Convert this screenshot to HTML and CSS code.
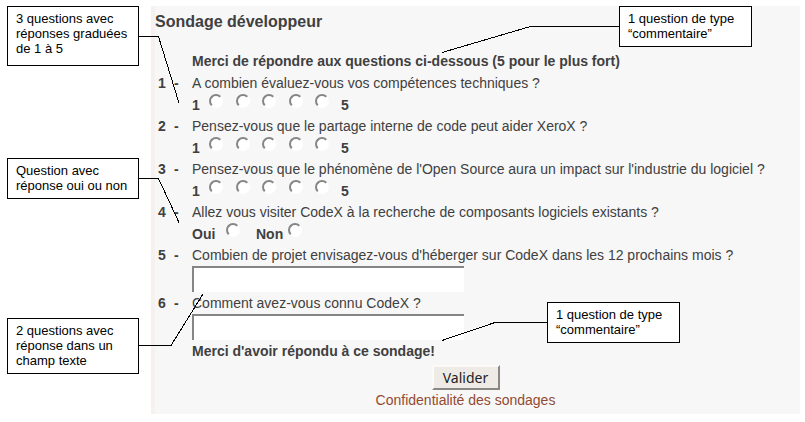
FILE: index.html
```html
<!DOCTYPE html>
<html lang="fr">
<head>
<meta charset="utf-8">
<title>Sondage développeur</title>
<link rel="stylesheet" href="styles.css">
</head>
<body>
<main class="panel">
  <h1 class="title">Sondage développeur</h1>
  <form class="survey">
    <p class="comment">Merci de répondre aux questions ci-dessous (5 pour le plus fort)</p>
    <div class="question" role="radiogroup" aria-labelledby="q1">
      <span class="num">1</span><span class="dash">-</span>
      <span class="label" id="q1">A combien évaluez-vous vos compétences techniques ?</span>
      <div class="answer">
        <b class="low">1</b>
        <span class="scale"><input type="radio" name="q1" aria-label="1"><input type="radio" name="q1" aria-label="2"><input type="radio" name="q1" aria-label="3"><input type="radio" name="q1" aria-label="4"><input type="radio" name="q1" aria-label="5"></span>
        <b>5</b>
      </div>
    </div>
    <div class="question" role="radiogroup" aria-labelledby="q2">
      <span class="num">2</span><span class="dash">-</span>
      <span class="label" id="q2">Pensez-vous que le partage interne de code peut aider XeroX ?</span>
      <div class="answer">
        <b class="low">1</b>
        <span class="scale"><input type="radio" name="q2" aria-label="1"><input type="radio" name="q2" aria-label="2"><input type="radio" name="q2" aria-label="3"><input type="radio" name="q2" aria-label="4"><input type="radio" name="q2" aria-label="5"></span>
        <b>5</b>
      </div>
    </div>
    <div class="question" role="radiogroup" aria-labelledby="q3">
      <span class="num">3</span><span class="dash">-</span>
      <span class="label" id="q3">Pensez-vous que le phénomène de l'Open Source aura un impact sur l'industrie du logiciel ?</span>
      <div class="answer">
        <b class="low">1</b>
        <span class="scale"><input type="radio" name="q3" aria-label="1"><input type="radio" name="q3" aria-label="2"><input type="radio" name="q3" aria-label="3"><input type="radio" name="q3" aria-label="4"><input type="radio" name="q3" aria-label="5"></span>
        <b>5</b>
      </div>
    </div>
    <div class="question" role="radiogroup" aria-labelledby="q4">
      <span class="num">4</span><span class="dash">-</span>
      <span class="label" id="q4">Allez vous visiter CodeX à la recherche de composants logiciels existants ?</span>
      <div class="answer yesno">
        <label class="yes" for="oui">Oui</label><input type="radio" name="q4" id="oui">
        <label class="no" for="non">Non</label><input type="radio" name="q4" id="non">
      </div>
    </div>
    <div class="question">
      <span class="num">5</span><span class="dash">-</span>
      <label class="label" for="q5">Combien de projet envisagez-vous d'héberger sur CodeX dans les 12 prochains mois ?</label>
      <input class="field" type="text" id="q5">
    </div>
    <div class="question">
      <span class="num">6</span><span class="dash">-</span>
      <label class="label" for="q6">Comment avez-vous connu CodeX ?</label>
      <input class="field" type="text" id="q6">
    </div>
    <p class="comment">Merci d'avoir répondu à ce sondage!</p>
    <div class="actions">
      <button class="submit" type="submit">Valider</button>
      <a class="privacy" href="#">Confidentialité des sondages</a>
    </div>
  </form>
</main>

<!-- Callouts laid over the form -->
<svg class="leaders" width="805" height="422" viewBox="0 0 805 422" aria-hidden="true">
  <path d="M138 36.5H158.5L179 103"/>
  <path d="M619 26.5H530.5L442 52.5"/>
  <path d="M138 178.5H158.5L179 222.5"/>
  <path d="M138 345.5H171L203 294"/>
  <path d="M547 322.5H495L442 340.5"/>
</svg>
<aside class="note note-scale">3 questions avec<br>réponses graduées<br>de 1 à 5</aside>
<aside class="note note-intro">1 question de type<br>“commentaire”</aside>
<aside class="note note-yesno">Question avec<br>réponse oui ou non</aside>
<aside class="note note-text">2 questions avec<br>réponse dans un<br>champ texte</aside>
<aside class="note note-outro">1 question de type<br>“commentaire”</aside>
</body>
</html>
```
FILE: styles.css
```css
* {
  box-sizing: border-box;
}

body {
  margin: 0;
  padding: 6px 5px 8px 151px;
  position: relative;
  background: #fff;
  color: #404040;
  font: 14px/22px "Liberation Sans", Arial, sans-serif;
}

.panel {
  padding: 4px 0;
  border-left: 4px solid #f6f0ee;
  background: #f7f7f7;
}

.title {
  margin: 0 0 16px;
  font-size: 16px;
  line-height: 24px;
}

.comment {
  margin: 0 0 0 37px;
  font-weight: bold;
}

.question {
  display: grid;
  grid-template-columns: 16px 18px 1fr;
  padding-left: 3px;
  white-space: nowrap;
}

.num,
.dash {
  font-weight: bold;
}

.answer {
  grid-column: 3;
  display: flex;
  align-items: flex-start;
  height: 21px;
  font-weight: bold;
}

.low {
  width: 17px;
}

.scale {
  display: flex;
  justify-content: space-between;
  width: 120px;
  margin-right: 12px;
}

.yes {
  width: 34px;
}

.no {
  width: 32px;
  margin-left: 16px;
}

input[type="radio"] {
  appearance: none;
  width: 14px;
  height: 14px;
  margin: 0;
  border: 2px solid;
  border-color: #858585 transparent transparent #858585;
  border-radius: 50%;
  background: #fff;
}

input[type="radio"]:checked {
  background: radial-gradient(#404040 3px, #fff 4px);
}

.field {
  grid-column: 3;
  width: 272px;
  height: 26px;
  margin: 0;
  padding: 2px 4px;
  border: solid #858585;
  border-width: 2px 0 0 2px;
  border-radius: 0;
  font: inherit;
  background: #fff;
}

.actions {
  display: flex;
  flex-direction: column;
  align-items: center;
  padding-right: 24px;
  margin-top: 3px;
}

.submit {
  width: 68px;
  height: 25px;
  padding: 0;
  border: 2px solid;
  border-color: #fbfaf8 #8a8784 #8a8784 #fbfaf8;
  background: #eeebe6;
  color: #222;
  font: 14px/20px "Noto Sans", sans-serif;
}

.privacy {
  line-height: 20px;
  color: #914b33;
  text-decoration: none;
}

.leaders {
  position: absolute;
  top: 0;
  left: 0;
  fill: none;
  stroke: #000;
  shape-rendering: crispEdges;
  pointer-events: none;
}

.note {
  position: absolute;
  width: 132px;
  padding: 4px 0 5px 8px;
  border: 1px solid #000;
  background: #fff;
  color: #000;
  font-size: 13px;
  line-height: 15px;
  white-space: nowrap;
}

.note-scale {
  top: 6px;
  left: 7px;
  min-height: 60px;
}

.note-intro {
  top: 6px;
  left: 619px;
  width: 133px;
}

.note-yesno {
  top: 158px;
  left: 7px;
}

.note-text {
  top: 318px;
  left: 7px;
}

.note-outro {
  top: 302px;
  left: 547px;
  width: 133px;
}
```
